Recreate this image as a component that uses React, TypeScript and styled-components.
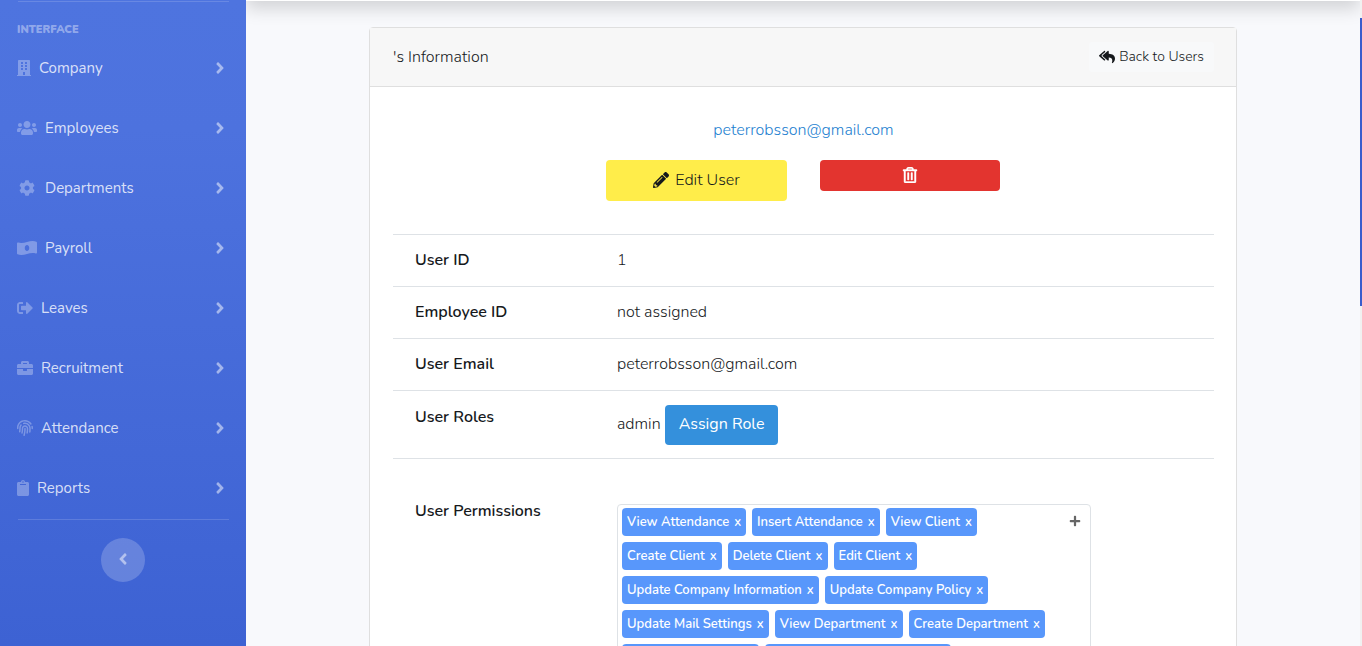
import React from 'react';
import styled, { createGlobalStyle, css } from 'styled-components';
import {
  FaAngleLeft,
  FaAngleRight,
  FaBriefcase,
  FaBuilding,
  FaClipboard,
  FaCog,
  FaFingerprint,
  FaPencilAlt,
  FaPlus,
  FaRegTrashAlt,
  FaReplyAll,
  FaSignOutAlt,
  FaUsers,
} from 'react-icons/fa';

const GlobalStyle = createGlobalStyle`
  *, *::before, *::after { box-sizing: border-box; }
  body {
    margin: 0;
    background: #f8f9fc;
    color: #16191c;
    font-family: Nunito, Lato, 'Open Sans', sans-serif;
    font-size: 16px;
    font-weight: 300;
    line-height: 24px;
  }
  a { text-decoration: none; }
  button { font: inherit; border: 0; cursor: pointer; }
`;

const Shell = styled.div`
  display: flex;
  height: 100vh;
  overflow: hidden;
`;

const Sidebar = styled.nav`
  flex: 0 0 246px;
  display: flex;
  flex-direction: column;
  padding: 1px 17px 0;
  background: linear-gradient(180deg, #4e74df 0%, #4d72de 20%, #3d62d3 100%);
`;

const Divider = styled.hr`
  align-self: stretch;
  margin: 0 0 0 1px;
  border: 0;
  border-top: 1px solid rgba(255, 255, 255, 0.15);
`;

const SectionTitle = styled.div`
  margin-top: 20px;
  font-size: 11px;
  font-weight: 900;
  line-height: 16px;
  color: rgba(255, 255, 255, 0.4);
`;

const NavList = styled.ul`
  list-style: none;
  margin: 0 0 1px;
  padding: 0;
`;

const NavLink = styled.a`
  display: flex;
  align-items: center;
  gap: 8px;
  height: 60px;
  color: rgba(255, 255, 255, 0.8);
  font-size: 15px;
  font-weight: 400;

  > svg { margin-left: auto; color: rgba(255, 255, 255, 0.5); }
`;

const IconSlot = styled.span<{ $width: number }>`
  display: flex;
  justify-content: center;
  flex: none;
  width: ${(p) => p.$width}px;
  color: rgba(255, 255, 255, 0.3);

  svg { flex: none; }
`;

const Collapse = styled.button`
  display: flex;
  align-items: center;
  justify-content: center;
  align-self: center;
  width: 44px;
  height: 44px;
  margin-top: 18px;
  padding: 0 0 2px;
  border-radius: 50%;
  background: rgba(255, 255, 255, 0.2);
  color: rgba(255, 255, 255, 0.5);
`;

const Main = styled.main`
  flex: 1;
  min-width: 0;
  overflow: hidden;
`;

const Topbar = styled.header`
  height: 70px;
  margin-top: -69px;
  margin-bottom: 26px;
  background: #fff;
  box-shadow: 0 8px 16px rgba(0, 0, 0, 0.15);
`;

const ScrollTrack = styled.div`
  flex: 0 0 2px;
  padding-top: 18px;
  background: #f1f1f1;
`;

const ScrollThumb = styled.div`
  height: 46%;
  max-height: 288px;
  background: #3a5ccc;
`;

const Card = styled.section`
  max-width: 868px;
  margin: 0 auto;
  background: #fff;
  border: 1px solid #dfdfdf;
  border-radius: 4px;
`;

const CardHeader = styled.div`
  display: flex;
  align-items: center;
  justify-content: space-between;
  height: 59px;
  padding: 0 22px 0 23px;
  background: #f7f7f7;
  border-bottom: 1px solid #dfdfdf;
`;

const CardTitle = styled.h1`
  margin: 0;
  font-size: 16px;
  font-weight: inherit;
`;

const BackLink = styled.a`
  display: flex;
  align-items: center;
  gap: 4px;
  height: 30px;
  padding: 0 10px;
  border-radius: 3px;
  background: #f8f9fa;
  color: #16191c;
  font-size: 14px;
`;

const CardBody = styled.div`
  padding: 31px 22px 0 23px;
`;

const Email = styled.a`
  display: block;
  width: max-content;
  margin: 0 auto 18px;
  color: #2380d0;
`;

const Actions = styled.div`
  display: flex;
  justify-content: center;
  align-items: flex-start;
  gap: 33px;
  margin-bottom: 33px;
  padding-right: 1px;
`;

const ActionButton = styled.button<{ $kind: 'edit' | 'delete' }>`
  display: flex;
  align-items: center;
  justify-content: center;
  gap: 6px;
  padding-bottom: 2px;
  border-radius: 4px;
  ${(p) =>
    p.$kind === 'edit'
      ? css`
          flex: 0 1 181px;
          height: 41px;
          background: #ffed4a;
          color: #16191c;
        `
      : css`
          flex: 0 1 180px;
          height: 31px;
          background: #e3342f;
          color: #fff;
          svg { stroke: currentColor; stroke-width: 14; }
        `}
`;

const DetailTable = styled.table`
  width: 100%;
  border-collapse: separate;
  border-spacing: 0;
  table-layout: fixed;
`;

const Label = styled.th<{ $top?: number }>`
  width: 202px;
  padding: ${(p) => p.$top ?? 13}px 0 13px 22px;
  border-top: 1px solid #dee2e6;
  text-align: left;
  vertical-align: top;
  font-weight: 600;
`;

const Value = styled.td<{ $top?: number }>`
  padding: ${(p) => p.$top ?? 13}px 22px ${(p) => (p.$top ? 13 : 14)}px;
  border-top: 1px solid #dee2e6;
  vertical-align: top;
`;

const RoleLine = styled.div`
  display: flex;
  align-items: baseline;
  gap: 4px;
`;

const AssignButton = styled.button`
  height: 40px;
  padding: 0 14px 2px;
  border-radius: 4px;
  background: #3490dc;
  color: #fff;
  font-weight: 400;
`;

const PermissionBox = styled.div`
  display: flex;
  align-items: flex-start;
  max-width: 474px;
  padding: 3px 9px 3px 4px;
  border: 1px solid #dee2e6;
  border-radius: 4px;
`;

const TagList = styled.ul`
  flex: 1;
  display: flex;
  flex-wrap: wrap;
  gap: 6px;
  list-style: none;
  margin: 0;
  padding: 0;
`;

const Tag = styled.li`
  display: flex;
  align-items: center;
  gap: 5px;
  height: 28px;
  padding: 0 5px;
  border-radius: 4px;
  background: #5897fb;
  color: #fff;
  font-size: 13px;
  font-weight: 600;
  line-height: 20px;
`;

const RemoveTag = styled.button`
  padding: 0;
  background: none;
  color: #fff;
`;

const AddTag = styled.button`
  display: flex;
  padding: 7px 0 0;
  background: none;
  color: #666;
`;

function BanknoteIcon({ size }: { size: number }) {
  return (
    <svg width={size} height={size} viewBox="0 0 640 512" fill="currentColor" fillRule="evenodd" aria-hidden="true">
      <path d="M621 54C582 38 543 32 505 32c-123 0-247 62-370 62-31 0-62-4-93-13C20 75 0 90 0 111v317c0 13 7 25 19 30 39 16 77 22 116 22 123 0 247-62 370-62 31 0 62 4 93 13 22 7 42-9 42-30V84c0-13-7-25-19-30zM320 352c-44 0-72-43-72-96s28-96 72-96 72 43 72 96-28 96-72 96z" />
    </svg>
  );
}

const navItems = [
  { label: 'Company', Icon: FaBuilding, width: 14, size: 16 },
  { label: 'Employees', Icon: FaUsers, width: 20, size: 20 },
  { label: 'Departments', Icon: FaCog, width: 20, size: 16 },
  { label: 'Payroll', Icon: BanknoteIcon, width: 20, size: 20 },
  { label: 'Leaves', Icon: FaSignOutAlt, width: 16, size: 16 },
  { label: 'Recruitment', Icon: FaBriefcase, width: 16, size: 16 },
  { label: 'Attendance', Icon: FaFingerprint, width: 16, size: 16 },
  { label: 'Reports', Icon: FaClipboard, width: 12, size: 16 },
];

const details = [
  ['User ID', '1'],
  ['Employee ID', 'not assigned'],
  ['User Email', 'peterrobsson@gmail.com'],
];

const permissions = [
  'View Attendance',
  'Insert Attendance',
  'View Client',
  'Create Client',
  'Delete Client',
  'Edit Client',
  'Update Company Information',
  'Update Company Policy',
  'Update Mail Settings',
  'View Department',
  'Create Department',
  'Delete Department',
  'View Employee Information',
];

export default function App() {
  return (
    <>
      <GlobalStyle />
      <Shell>
        <Sidebar>
          <Divider />
          <SectionTitle>INTERFACE</SectionTitle>
          <NavList>
            {navItems.map(({ label, Icon, width, size }) => (
              <li key={label}>
                <NavLink href="#">
                  <IconSlot $width={width}>
                    <Icon size={size} />
                  </IconSlot>
                  {label}
                  <FaAngleRight size={18} />
                </NavLink>
              </li>
            ))}
          </NavList>
          <Divider />
          <Collapse aria-label="Collapse sidebar">
            <FaAngleLeft size={18} />
          </Collapse>
        </Sidebar>
        <Main>
          <Topbar />
          <Card>
            <CardHeader>
              <CardTitle>'s Information</CardTitle>
              <BackLink href="#">
                <FaReplyAll size={16} />
                Back to Users
              </BackLink>
            </CardHeader>
            <CardBody>
              <Email href="#">peterrobsson@gmail.com</Email>
              <Actions>
                <ActionButton $kind="edit">
                  <FaPencilAlt size={16} />
                  Edit User
                </ActionButton>
                <ActionButton $kind="delete" aria-label="Delete user">
                  <FaRegTrashAlt size={16} />
                </ActionButton>
              </Actions>
              <DetailTable>
                <tbody>
                  {details.map(([label, value]) => (
                    <tr key={label}>
                      <Label scope="row">{label}</Label>
                      <Value>{value}</Value>
                    </tr>
                  ))}
                  <tr>
                    <Label scope="row" $top={14}>User Roles</Label>
                    <Value $top={14}>
                      <RoleLine>
                        admin
                        <AssignButton>Assign Role</AssignButton>
                      </RoleLine>
                    </Value>
                  </tr>
                  <tr>
                    <Label scope="row" $top={40}>User Permissions</Label>
                    <Value $top={45}>
                      <PermissionBox>
                        <TagList>
                          {permissions.map((name) => (
                            <Tag key={name}>
                              {name}
                              <RemoveTag aria-label={`Remove ${name}`}>x</RemoveTag>
                            </Tag>
                          ))}
                        </TagList>
                        <AddTag aria-label="Add permission">
                          <FaPlus size={12} />
                        </AddTag>
                      </PermissionBox>
                    </Value>
                  </tr>
                </tbody>
              </DetailTable>
            </CardBody>
          </Card>
        </Main>
        <ScrollTrack>
          <ScrollThumb />
        </ScrollTrack>
      </Shell>
    </>
  );
}
